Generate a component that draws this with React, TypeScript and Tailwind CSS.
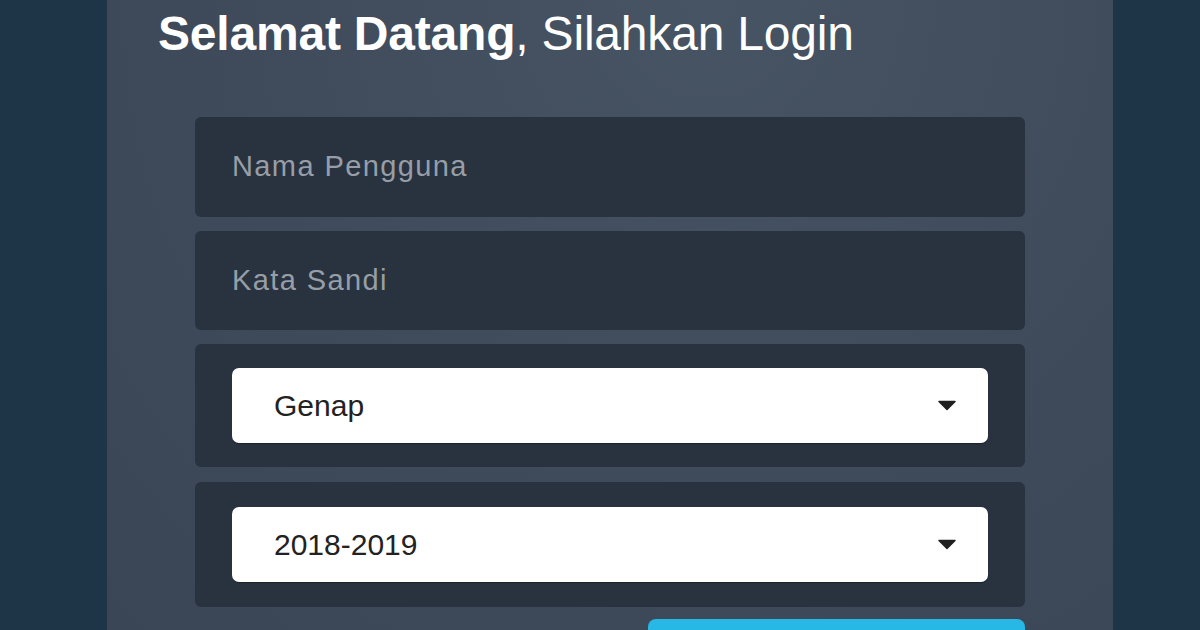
const Caret = () => (
    <svg width="20" height="11" viewBox="0 0 20 11" className="shrink-0">
        <path d="M2 1.5 L18 1.5 L10 9.5 Z" fill="#1f1f1f" stroke="#1f1f1f" strokeWidth="1.5" strokeLinejoin="round" />
    </svg>
);

const TextField = ({ placeholder, type = "text", height }: { placeholder: string; type?: string; height: string }) => (
    <div className={`${height} flex items-center rounded-md bg-[#29333f] px-[37px]`}>
        <input
            type={type}
            placeholder={placeholder}
            className="w-full bg-transparent text-[29px] tracking-[1.4px] text-[#c9ced4] placeholder:text-[#979ea7] outline-none font-['Liberation_Sans',Arial,sans-serif]"
        />
    </div>
);

const SelectField = ({ value, pad }: { value: string; pad: string }) => (
    <div className={`rounded-md bg-[#29333f] ${pad} px-[37px]`}>
        <div className="flex h-[75px] items-center justify-between rounded-[7px] bg-white pl-[42px] pr-[31px] shadow-[0_1px_1px_rgba(0,0,0,0.35)]">
            <span className="text-[30px] leading-none text-[#222] font-['Liberation_Sans',Arial,sans-serif]">{value}</span>
            <Caret />
        </div>
    </div>
);

const App = () => {
    return (
        <div className="h-[630px] w-[1200px] overflow-hidden bg-[#1e3447] font-['Liberation_Sans',Arial,sans-serif]">
            <div className="ml-[107px] h-full w-[1006px] bg-[radial-gradient(ellipse_at_60%_0%,#475463_0%,#3f4b5a_55%,#3a4655_100%)]">
                <h1 className="pl-[51px] pt-[10px] text-[48px] leading-[48px] tracking-[-0.2px] text-white">
                    <span className="font-bold">Selamat Datang</span>, Silahkan Login
                </h1>

                <form className="mx-[88px] mt-[59px] flex flex-col gap-[14px]">
                    <TextField placeholder="Nama Pengguna" height="h-[100px]" />
                    <TextField placeholder="Kata Sandi" type="password" height="h-[99px]" />
                    <SelectField value="Genap" pad="py-6" />
                    <div className="mt-px">
                        <SelectField value="2018-2019" pad="py-[25px]" />
                    </div>
                    <div className="-mt-[2px] flex justify-end">
                        {/* label sits below the fold */}
                        <button type="submit" aria-label="Masuk" className="h-[66px] w-[377px] rounded-lg bg-[#27b8e6]" />
                    </div>
                </form>
            </div>
        </div>
    );
};

export default App;
